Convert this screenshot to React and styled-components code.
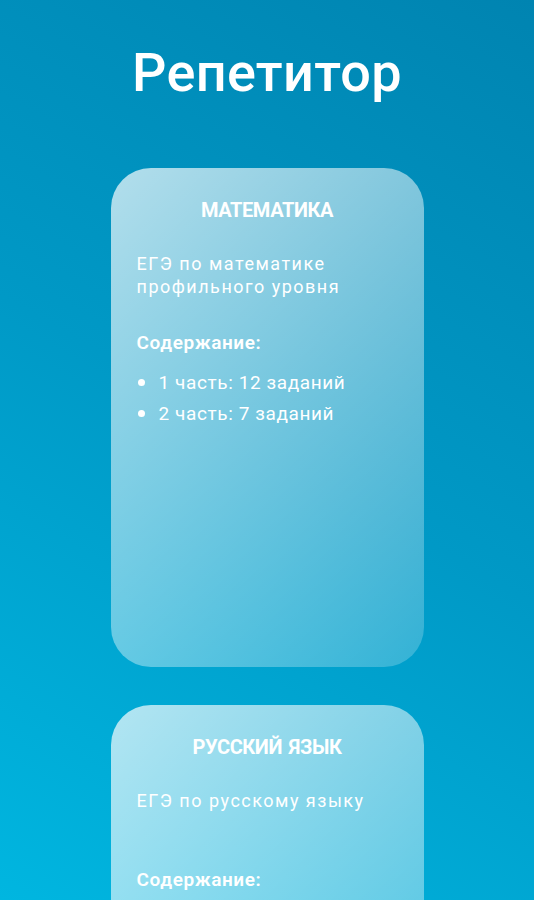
import React from 'react'
import styled, { createGlobalStyle } from 'styled-components';

const GlobalStyle = createGlobalStyle`
  html, body {
    margin: 0;
    padding: 0;
  }

  body {
    font-family: Roboto, "Noto Sans", sans-serif;
    color: #fff;
    background: linear-gradient(30deg, #00b6e0 0%, #0099c6 50%, #0084b1 100%) fixed;
    min-height: 100vh;
  }
`;

const materias = [
  {
    id: 'mat',
    titulo: 'МАТЕМАТИКА',
    descripcion: 'ЕГЭ по математике профильного уровня',
    partes: ['1 часть: 12 заданий', '2 часть: 7 заданий']
  },
  {
    id: 'rus',
    titulo: 'РУССКИЙ ЯЗЫК',
    descripcion: 'ЕГЭ по русскому языку',
    partes: ['1 часть: 26 заданий', '2 часть: 1 задание']
  }
];

const Tarjeta = ({titulo, descripcion, partes}) => {
  return (
    <ContenedorTarjeta>
      <TituloTarjeta>{titulo}</TituloTarjeta>
      <Descripcion>{descripcion}</Descripcion>
      <Subtitulo>Содержание:</Subtitulo>
      <Lista>
        {partes.map((parte) => (
          <Item key={parte}>{parte}</Item>
        ))}
      </Lista>
    </ContenedorTarjeta>
  );
}

const App = () => {
  return (
    <>
      <GlobalStyle />
      <Pagina>
        <Titulo>Репетитор</Titulo>
        <ListaTarjetas>
          {materias.map((m) => (
            <Tarjeta key={m.id} {...m} />
          ))}
        </ListaTarjetas>
      </Pagina>
    </>
  );
}

const Pagina = styled.div`
  display: flex;
  flex-direction: column;
  align-items: center;
  padding: 40px 0 60px;
`;

const Titulo = styled.h1`
  margin: 0;
  font-size: 54px;
  line-height: 66px;
  font-weight: 500;
  letter-spacing: 0.3px;
`;

const ListaTarjetas = styled.div`
  display: flex;
  flex-direction: column;
  gap: 38px;
  margin-top: 62px;
`;

const ContenedorTarjeta = styled.div`
  box-sizing: border-box;
  width: 313px;
  height: 499px;
  padding: 28px 26px;
  border-radius: 40px;
  background: linear-gradient(135deg, rgba(255,255,255,.7), rgba(255,255,255,.2));
`;

const TituloTarjeta = styled.h2`
  margin: 0;
  text-align: center;
  font-family: Roboto, sans-serif;
  font-size: 20px;
  line-height: 28px;
  font-weight: bold;
  letter-spacing: -0.4px;
  word-spacing: 2px;
`;

const Descripcion = styled.p`
  margin: 28px 0 0;
  min-height: 66px;
  font-size: 18px;
  line-height: 23px;
  letter-spacing: 1.5px;
`;

const Subtitulo = styled.h3`
  margin: 13px 0 0;
  font-size: 19px;
  line-height: 24px;
  font-weight: 600;
  letter-spacing: 0.6px;
`;

const Lista = styled.ul`
  margin: 12px 0 0;
  padding: 0;
  list-style: none;
`;

const Item = styled.li`
  display: flex;
  align-items: center;
  gap: 14px;
  font-size: 19px;
  line-height: 31px;
  letter-spacing: 0.6px;

  &::before {
    content: '';
    width: 7px;
    height: 7px;
    border-radius: 50%;
    background: #fff;
    margin-left: 1px;
  }
`;

export default App;
